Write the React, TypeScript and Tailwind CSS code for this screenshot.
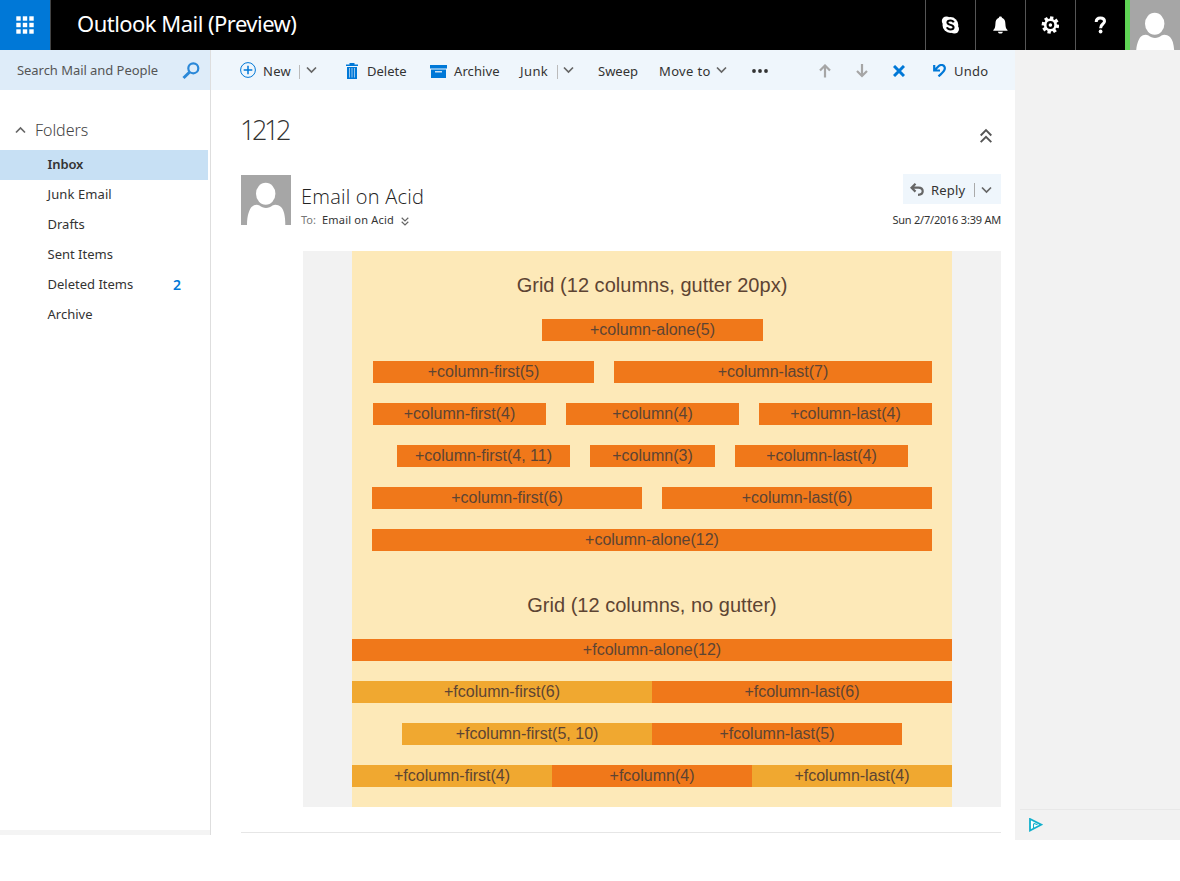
import React from "react";

function Chevron({ className = "", flip = false }: { className?: string; flip?: boolean }) {
  return (
    <svg className={className} width="11" height="8" viewBox="0 0 11 8" fill="none" stroke="#666" strokeWidth="1.700">
      <path d={flip ? "M1 6.5 5.5 2 10 6.5" : "M1 1.5 5.5 6 10 1.5"} />
    </svg>
  );
}

function Person({ className }: { className: string }) {
  return (
    <svg className={className} width="50" height="50" viewBox="0 0 50 50">
      <path fill="#a6a6a6" d="M0 0h50v50H0z" />
      <ellipse cx="24.7" cy="18.8" rx="9.700" ry="11" fill="#fff" />
      <path fill="#fff" d="M6 50C6 40 8.500 34.500 10.500 32C13 29.500 16 29 18.500 30.500C22 33.800 28 33.800 31.500 30.500C34 29 37 29.500 40 32C43 35 44.300 41 44.300 50z" />
    </svg>
  );
}

function Row({ children }: { children: React.ReactNode }) {
  return <div className="flex h-[22px] mb-5 text-base leading-[22px]">{children}</div>;
}

function Cell({ className, label }: { className: string; label: string }) {
  return <div className={"shrink-0 text-center whitespace-nowrap " + className}>{label}</div>;
}

const folders = [
  { name: "Inbox", box: "bg-[#c7e0f4] font-semibold tracking-[-0.1px]" },
  { name: "Junk Email", box: "tracking-[0.1px]" },
  { name: "Drafts", box: "" },
  { name: "Sent Items", box: "" },
  { name: "Deleted Items", box: "", count: "2" },
  { name: "Archive", box: "" },
];

function Header() {
  return (
    <header className="flex h-[50px] bg-black text-white">
      <div className="flex w-[51px] items-center border-r border-[#444] bg-[#0078d7] pl-4">
        <svg width="18" height="18" viewBox="0 0 18 18" fill="#fff">
          {[0, 6.5, 13].map((y) => [0, 6.5, 13].map((x) => <rect key={`${x}-${y}`} x={x + 0.3} y={y + 0.3} width="4.400" height="4.400" />))}
        </svg>
      </div>
      <h1 className="ml-[26px] w-[230px] whitespace-nowrap text-[22px] leading-[46px] tracking-[-0.53px]">Outlook Mail (Preview)</h1>
      <div className="ml-auto flex">
        <div className="flex w-[50px] items-center justify-center border-l border-[#555] pr-px">
          <svg width="18" height="18" viewBox="-.4 0 18 18">
            <circle cx="9" cy="9" r="7.900" fill="#fff" />
            <circle cx="5" cy="5" r="4.600" fill="#fff" />
            <circle cx="13" cy="13" r="4.600" fill="#fff" />
            <path d="M12.300 6.400C11.800 4.900 10.400 4.500 9 4.500C7.300 4.500 6 5.300 6 6.600C6 9.600 12.200 8.200 12.200 11.200C12.200 12.700 10.700 13.400 9 13.400C7.300 13.400 6 12.700 5.600 11.300" fill="none" stroke="#000" strokeWidth="2" />
          </svg>
        </div>
        <div className="flex w-[50px] items-center justify-center border-l border-[#555] pr-px">
          <svg width="16" height="18" viewBox="-.4 0 16 18" fill="#fff">
            <path d="M8 .5c1 0 1.500.5 1.500 1.300C12.200 2.700 12.900 5 13 8c.1 3 .6 4.700 2.100 6v.8H.9V14c1.500-1.300 2-3 2.100-6C3.100 5 3.800 2.700 6.500 1.800C6.500 1 7 .5 8 .5zM5.500 15.700h5c-.3 1.300-1.100 1.800-2.500 1.800s-2.200-.5-2.500-1.800z" />
          </svg>
        </div>
        <div className="flex w-[50px] items-center justify-center border-l border-[#555] pr-px">
          <svg width="18" height="18" viewBox="-9.400 -9 18 18">
            <g fill="#fff">
              {[10, 55, 100, 145, 190, 235, 280, 325].map((a) => (
                <path key={a} transform={`rotate(${a})`} d="M-1.700-8.700H1.700V-5H-1.700z" />
              ))}
              <circle r="6.500" />
            </g>
            <circle r="2.800" fill="none" stroke="#000" strokeWidth="2.200" />
          </svg>
        </div>
        <div className="flex w-[50px] items-center justify-center border-l border-[#555] pr-px">
          <svg width="12" height="18" viewBox="-.5 0 12 18">
            <path d="M1.700 6C1.700 3.400 3.300 2 5.900 2c2.700 0 4.100 1.400 4.100 3.200C10 8.200 6.100 7.900 6.100 12.200" fill="none" stroke="#fff" strokeWidth="3" />
            <circle cx="6.100" cy="15.500" r="1.900" fill="#fff" />
          </svg>
        </div>
        <div className="w-[5px] bg-[#5fd455]" />
        <div className="h-[50px] w-[50px] overflow-hidden bg-[#a6a6a6] pt-[5px]">
          <Person className="block" />
        </div>
      </div>
    </header>
  );
}

function Sidebar() {
  return (
    <aside className="flex h-[785px] w-[211px] shrink-0 flex-col border-r border-[#dedede]">
      <div className="flex h-10 items-center bg-[#deecf9] pl-[17px]">
        <span className="w-[165px] whitespace-nowrap pt-[2px] text-[13px] tracking-[-0.05px] text-[#555]">Search Mail and People</span>
        <svg width="19" height="19" viewBox="0 0 19 19" fill="none" stroke="#2b88d8">
          <circle cx="11.300" cy="7.300" r="5" strokeWidth="2.200" />
          <path d="M7.700 11 1.500 17" strokeWidth="3" />
        </svg>
      </div>
      <div className="mt-[25px] mb-[5px] flex h-[30px] items-center pl-[15px] text-base text-[#444]">
        <Chevron flip className="mr-[9px]" />
        <span className="font-[350] tracking-[-0.05px]">Folders</span>
      </div>
      <nav>
        {folders.map((f) => (
          <div key={f.name} className={"flex h-[30px] w-[208px] items-center pl-[47.5px] text-[13px] leading-[28px] text-[#333] " + f.box}>
            <span className="flex-1 pb-[2px]">{f.name}</span>
            {f.count && <span className="mr-[27px] text-[14px] font-semibold text-[#0078d7]">{f.count}</span>}
          </div>
        ))}
      </nav>
      <div className="mt-auto h-[5px] bg-[#f4f4f4]" />
    </aside>
  );
}

function Toolbar() {
  return (
    <div className="flex h-10 items-center bg-[#eff6fc] pt-[3px] pl-[29px] text-[13px] text-[#333] whitespace-nowrap">
      <svg className="mb-[3px]" width="16" height="16" viewBox="0 0 16 16" fill="none" stroke="#0078d7">
        <circle cx="8" cy="8" r="7.400" />
        <path d="M8 3.700v8.600M3.700 8h8.600" strokeWidth="1.500" />
      </svg>
      <span className="ml-[7px] w-[36px] pt-px tracking-[0.3px]">New</span>
      <i className="h-[14px] w-px bg-[#bbb]" />
      <Chevron className="ml-[6px] mb-[3px]" />
      <svg className="ml-[29px] mb-px" width="12" height="16" viewBox="0 0 12 16" fill="#0078d7">
        <path d="M0 1.500h3.500V0h5v1.500H12V3H0zM1 4h10v12H1z" />
        <path d="M3.500 5v9.500M6 5v9.500M8.500 5v9.500" stroke="#a5cef0" strokeWidth=".9" />
      </svg>
      <span className="ml-[9px] w-[63px] pt-px">Delete</span>
      <svg width="17" height="14" viewBox="0 0 17 14" fill="#0078d7">
        <path d="M0 0h17v3.600H0zM1 4.600h15v8.400H1z" />
        <path d="M5 6h7v1.500H5z" fill="#c9e1f5" />
      </svg>
      <span className="ml-[7px] w-[66px] pt-px tracking-[0.1px]">Archive</span>
      <span className="w-[37px] pt-px tracking-[0.4px]">Junk</span>
      <i className="h-[14px] w-px bg-[#bbb]" />
      <Chevron className="ml-[5px] mb-[3px]" />
      <span className="ml-[24px] w-[61px] pt-px">Sweep</span>
      <span className="w-[57px] pt-px tracking-[0.35px]">Move to</span>
      <Chevron className="mb-[3px]" />
      <svg className="ml-[25px] mb-px" width="16" height="4" viewBox="0 0 16 4" fill="#333">
        <circle cx="2" cy="2" r="1.900" /><circle cx="8" cy="2" r="1.900" /><circle cx="14" cy="2" r="1.900" />
      </svg>
      <svg className="ml-[51px] mb-px" width="12" height="14" viewBox="0 0 12 14" fill="none" stroke="#a6a6a6" strokeWidth="2.200">
        <path d="M6 13.500V1.500M1 6.500l5-5 5 5" />
      </svg>
      <svg className="ml-[25px] mb-px" width="12" height="14" viewBox="0 0 12 14" fill="none" stroke="#a6a6a6" strokeWidth="2.200">
        <path d="M6 0v12M1 7l5 5 5-5" />
      </svg>
      <svg className="ml-[25px] mb-[2px]" width="12" height="12" viewBox="0 0 12 12" fill="none" stroke="#0078d7" strokeWidth="3">
        <path d="M1 1l10 10M11 1 1 11" />
      </svg>
      <svg className="ml-[28px] mb-[3px]" width="13" height="13" viewBox="0 0 13 13" fill="none" stroke="#0078d7" strokeWidth="2.200">
        <path d="M1.200 1v5.500H7M1.500 6.200 5.500 2.200C7.500.4 10.500.5 11.600 3C12.500 5.500 11.300 7 5.500 12.400" />
      </svg>
      <span className="ml-[8px] pt-px tracking-[0.2px]">Undo</span>
    </div>
  );
}

function EmailBody() {
  return (
    <div className="ml-[62px] h-[556px] w-[698px] bg-[#f2f2f2] pl-[49px]">
      <div className="h-full w-[600px] bg-[#fde9b8] pt-[23px] font-['Liberation_Sans',Arial,sans-serif] text-[#5d4433]">
        <h3 className="mb-[22px] h-[23px] text-center text-[20px] leading-[23px] tracking-[0.02px]">Grid (12 columns, gutter 20px)</h3>
        <Row><Cell className="ml-[190px] w-[221px] bg-[#f0781a]" label="+column-alone(5)" /></Row>
        <Row>
          <Cell className="ml-[21px] w-[221px] bg-[#f0781a]" label="+column-first(5)" />
          <Cell className="ml-5 w-[318px] bg-[#f0781a]" label="+column-last(7)" />
        </Row>
        <Row>
          <Cell className="ml-[21px] w-[173px] bg-[#f0781a]" label="+column-first(4)" />
          <Cell className="ml-5 w-[173px] bg-[#f0781a]" label="+column(4)" />
          <Cell className="ml-5 w-[173px] bg-[#f0781a]" label="+column-last(4)" />
        </Row>
        <Row>
          <Cell className="ml-[45px] w-[173px] bg-[#f0781a]" label="+column-first(4, 11)" />
          <Cell className="ml-5 w-[125px] bg-[#f0781a]" label="+column(3)" />
          <Cell className="ml-5 w-[173px] bg-[#f0781a]" label="+column-last(4)" />
        </Row>
        <Row>
          <Cell className="ml-5 w-[270px] bg-[#f0781a]" label="+column-first(6)" />
          <Cell className="ml-5 w-[270px] bg-[#f0781a]" label="+column-last(6)" />
        </Row>
        <Row><Cell className="ml-5 w-[560px] bg-[#f0781a]" label="+column-alone(12)" /></Row>
        <h3 className="mt-[43px] mb-[22px] h-[23px] text-center text-[20px] leading-[23px] tracking-[0.02px]">Grid (12 columns, no gutter)</h3>
        <Row><Cell className="w-[600px] bg-[#f0781a]" label="+fcolumn-alone(12)" /></Row>
        <Row>
          <Cell className="w-[300px] bg-[#f0a830]" label="+fcolumn-first(6)" />
          <Cell className="w-[300px] bg-[#f0781a]" label="+fcolumn-last(6)" />
        </Row>
        <Row>
          <Cell className="ml-[50px] w-[250px] bg-[#f0a830]" label="+fcolumn-first(5, 10)" />
          <Cell className="w-[250px] bg-[#f0781a]" label="+fcolumn-last(5)" />
        </Row>
        <Row>
          <Cell className="w-[200px] bg-[#f0a830]" label="+fcolumn-first(4)" />
          <Cell className="w-[200px] bg-[#f0781a]" label="+fcolumn(4)" />
          <Cell className="w-[200px] bg-[#f0a830]" label="+fcolumn-last(4)" />
        </Row>
      </div>
    </div>
  );
}

function Message() {
  return (
    <section className="ml-[30px] w-[760px]">
      <div className="flex h-[85px] justify-between pt-[20px]">
        <h2 className="-ml-px font-['Open_Sans','Noto_Sans',sans-serif] text-[27px] font-light leading-[39px] tracking-[-3.400px] text-[#333]">1212</h2>
        <svg className="mt-[18px] mr-[9px]" width="12" height="16" viewBox="0 0 12 16" fill="none" stroke="#555" strokeWidth="1.900">
          <path d="M.7 7.500 6 2.200 11.300 7.500M.7 14.200 6 8.900 11.300 14.200" />
        </svg>
      </div>
      <div className="flex h-[76px]">
        <Person className="shrink-0" />
        <div className="ml-[10px] pt-2">
          <div className="whitespace-nowrap font-['Open_Sans','Noto_Sans',sans-serif] text-[20px] font-light leading-[28px] tracking-[0.22px] text-[#222]">Email on Acid</div>
          <div className="flex items-center whitespace-nowrap text-[11px] leading-[18px] text-[#333]">
            <span className="w-[21px] text-[#777]">To:</span>
            <span className="w-[79px] tracking-[0.2px]">Email on Acid</span>
            <svg className="mt-[3px]" width="8" height="9" viewBox="0 0 8 9" fill="none" stroke="#666" strokeWidth="1.200">
              <path d="M.7.8 4 4 7.300.8M.7 4.800 4 8 7.300 4.800" />
            </svg>
          </div>
        </div>
        <div className="ml-auto flex flex-col items-end">
          <div className="-mt-px flex h-[30px] w-[98px] items-center bg-[#eff6fc] pl-[7px] text-[13px] text-[#333]">
            <svg className="mt-px" width="14" height="13" viewBox="0 0 14 13" fill="none" stroke="#666" strokeWidth="2.200">
              <path d="M5.500.8 1.500 4.700 5.500 8.600M1.500 4.700H8.500C11.500 4.700 12.700 6.300 12.700 8.300S11.500 11.800 8 11.800" />
            </svg>
            <span className="ml-[7px] w-[43px] pt-[3px] tracking-[0.2px]">Reply</span>
            <i className="mt-px h-[14px] w-px bg-[#aaa]" />
            <Chevron className="ml-[6px] mt-px" />
          </div>
          <div className="mt-[7px] whitespace-nowrap text-[11px] leading-[18px] tracking-[-0.22px] text-[#333]">Sun 2/7/2016 3:39 AM</div>
        </div>
      </div>
      <EmailBody />
      <div className="mt-[25px] h-px bg-[#e6e6e6]" />
    </section>
  );
}

export default function App() {
  return (
    <div className="h-[881px] w-[1180px] overflow-hidden bg-white font-['Noto_Sans','Open_Sans',sans-serif]">
      <Header />
      <div className="flex">
        <Sidebar />
        <main className="w-[804px] shrink-0">
          <Toolbar />
          <Message />
        </main>
        <aside className="flex h-[790px] flex-1 flex-col justify-end bg-[#f2f2f2] pl-[5px]">
          <div className="h-[31px] border-t border-[#e8e8e8] pt-2 pl-[9px]">
            <svg width="14" height="14" viewBox="0 0 14 14">
              <path d="M1 1v11.500L12.300 6.700z" fill="#fff" stroke="#12b0cc" strokeWidth="1.800" />
              <path d="M4.500 6v4M4.500 5.300l4 1.500" fill="none" stroke="#12b0cc" strokeWidth="1.100" />
            </svg>
          </div>
        </aside>
      </div>
    </div>
  );
}
